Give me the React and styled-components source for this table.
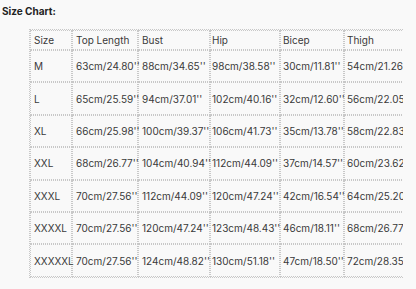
import React from "react";
import styled, { createGlobalStyle } from "styled-components";

const GlobalStyle = createGlobalStyle`
  html, body {
    margin: 0;
    padding: 0;
    background: #f9f9f9;
    overflow: hidden;
  }
  body {
    font-family: Inter, "Noto Sans", "Liberation Sans", sans-serif;
    color: #333;
  }
`;

const Page = styled.div`
  width: 416px;
  height: 289px;
  padding: 4px 0 0 2px;
  box-sizing: border-box;
`;

const Title = styled.div`
  font-size: 10px;
  font-weight: 700;
  line-height: 14px;
  color: #222;
`;

const Scroller = styled.div`
  margin: 11px 0 0 27px;
  width: 374px;
  overflow: hidden;
`;

const Table = styled.table`
  border-collapse: separate;
  border-spacing: 0;
  border: 1px dotted #c8c8c8;
  table-layout: fixed;
  width: 390px;
  font-size: 10px;
`;

const Cell = styled.td`
  border: 1px dotted #c8c8c8;
  padding: 0 0 0 ${(p) => p.$pad ?? 3}px;
  height: ${(p) => (p.$head ? 18 : 30.4)}px;
  white-space: nowrap;
  overflow: visible;
  vertical-align: middle;
  color: #3a3a3a;
`;

const cols = [
  { name: "Size", w: 42, pad: 3 },
  { name: "Top Length", w: 66, pad: 3 },
  { name: "Bust", w: 72, pad: 3 },
  { name: "Hip", w: 70, pad: 1 },
  { name: "Bicep", w: 64, pad: 2 },
  { name: "Thigh", w: 74, pad: 2 },
];

const rows = [
  ["M", "63cm/24.80''", "88cm/34.65''", "98cm/38.58''", "30cm/11.81''", "54cm/21.26''"],
  ["L", "65cm/25.59''", "94cm/37.01''", "102cm/40.16''", "32cm/12.60''", "56cm/22.05''"],
  ["XL", "66cm/25.98''", "100cm/39.37''", "106cm/41.73''", "35cm/13.78''", "58cm/22.83''"],
  ["XXL", "68cm/26.77''", "104cm/40.94''", "112cm/44.09''", "37cm/14.57''", "60cm/23.62''"],
  ["XXXL", "70cm/27.56''", "112cm/44.09''", "120cm/47.24''", "42cm/16.54''", "64cm/25.20''"],
  ["XXXXL", "70cm/27.56''", "120cm/47.24''", "123cm/48.43''", "46cm/18.11''", "68cm/26.77''"],
  ["XXXXXL", "70cm/27.56''", "124cm/48.82''", "130cm/51.18''", "47cm/18.50''", "72cm/28.35''"],
];

export default function App() {
  return (
    <Page>
      <GlobalStyle />
      <Title>Size Chart:</Title>
      <Scroller>
        <Table>
          <colgroup>
            {cols.map((c) => (
              <col key={c.name} style={{ width: c.w }} />
            ))}
          </colgroup>
          <tbody>
            <tr>
              {cols.map((c) => (
                <Cell key={c.name} $head $pad={c.pad}>
                  {c.name}
                </Cell>
              ))}
            </tr>
            {rows.map((r) => (
              <tr key={r[0]}>
                {r.map((v, i) => (
                  <Cell key={i} $pad={cols[i].pad}>
                    {v}
                  </Cell>
                ))}
              </tr>
            ))}
          </tbody>
        </Table>
      </Scroller>
    </Page>
  );
}
